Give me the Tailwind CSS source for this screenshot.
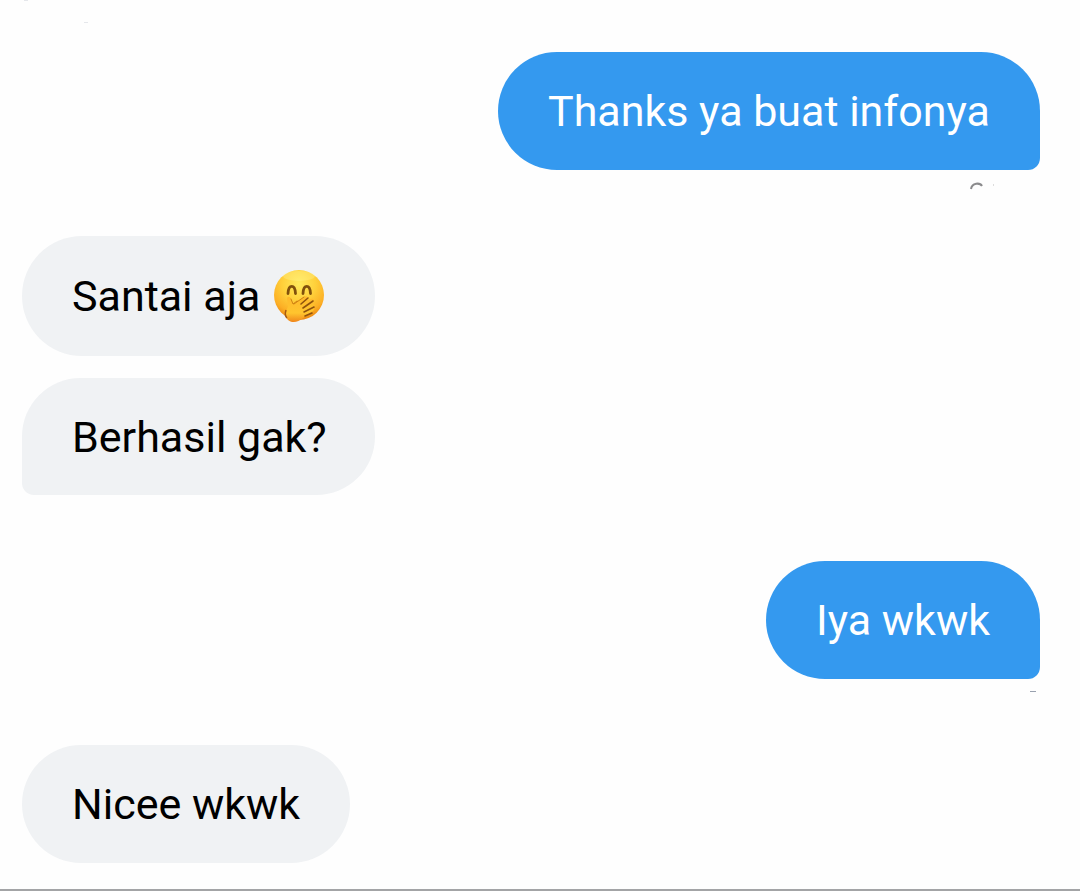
<!DOCTYPE html>
<html lang="id">
<head>
<meta charset="utf-8">
<meta name="viewport" content="width=device-width, initial-scale=1">
<title>Percakapan</title>
<script src="https://cdn.jsdelivr.net/npm/@tailwindcss/browser@4"></script>
</head>
<body class="bg-[#fefefe] font-['Roboto','Liberation_Sans',sans-serif] text-[43px] leading-[54px] text-black">
<main class="flex min-h-screen flex-col border-b-2 border-[#a3a4a6]">
  <div class="flex h-[52px] items-start gap-14 pl-6" aria-hidden="true">
    <span class="h-px w-1 bg-gray-200"></span>
    <span class="mt-[22px] h-px w-1 bg-gray-200"></span>
  </div>
  <ol class="flex flex-col pr-10 pl-[22px]">
    <li class="flex flex-col items-end">
      <p class="rounded-[59px] rounded-br-xl bg-[#3499ef] px-[50px] py-8 text-white">Thanks ya buat infonya</p>
      <div class="flex h-[66px] items-start pt-3 pr-11" aria-hidden="true">
        <svg class="h-2 w-7" viewBox="0 0 28 8" fill="none"><path d="M3 7C4 .5 12 .5 14 4" stroke="#8b8b8d" stroke-width="2"/><path d="M25 3h1" stroke="#bbb"/></svg>
      </div>
    </li>
    <li class="mb-[22px] flex">
      <p class="flex items-center rounded-[60px] bg-[#f0f2f4] px-[50px] py-[33px]">
        <span>Santai aja</span>
        <svg class="ml-[13px] h-[54px] w-[52px]" viewBox="0 0 52 54" role="img" aria-label="Wajah dengan tangan menutup mulut">
          <defs>
            <radialGradient id="face" cx="50%" cy="28%" r="74%">
              <stop offset="0" stop-color="#ffea5c"/><stop offset=".45" stop-color="#ffd03a"/><stop offset=".78" stop-color="#fcaf25"/><stop offset="1" stop-color="#e9800d"/>
            </radialGradient>
            <linearGradient id="hand" x1="0" y1="0" x2="0" y2="1">
              <stop offset="0" stop-color="#ffb92c"/><stop offset=".65" stop-color="#ffc52e"/><stop offset="1" stop-color="#f0861b"/>
            </linearGradient>
          </defs>
          <circle cx="26" cy="26" r="25" fill="url(#face)"/>
          <ellipse cx="26" cy="7" rx="16" ry="5" fill="#fff7a0" opacity=".3"/>
          <path d="M15 24.500C15.500 15 22 15 22.500 24.500M30 24.500C30.500 15 37 15 37.500 24.500" fill="none" stroke="#81510c" stroke-width="2.800" stroke-linecap="round"/>
          <path d="M15 51C11 47 14 41 15 37L14 30C14 27 17 27 18 30L20 35L31 28C34 26 36 28 34 31L38 30C41 29 42 32 40 34C42 34 42 37 40 38C42 39 41 42 38 43L30 49C25 54 18 54 15 51Z" fill="url(#hand)"/>
          <path d="M18 30L20 35L24 32M21 35L31 28" fill="none" stroke="#d08212" stroke-width="1" stroke-linecap="round"/>
          <path d="M28 35L35 29M30 39L40 32M31 43L41 38M32 47L39 44" fill="none" stroke="#8f520d" stroke-width="1.600" stroke-linecap="round"/>
          <path d="M13 41C12 44 12 47 14 49" fill="none" stroke="#a65a10" stroke-width="1.500"/>
        </svg>
      </p>
    </li>
    <li class="mb-[66px] flex">
      <p class="rounded-[59px] rounded-bl-xl bg-[#f0f2f4] pr-12 pl-[50px] pt-8 pb-[31px]">Berhasil gak?</p>
    </li>
    <li class="flex flex-col items-end">
      <p class="rounded-[59px] rounded-br-xl bg-[#3499ef] px-[50px] py-8 text-white">Iya wkwk</p>
      <div class="flex h-[66px] items-start pt-3 pr-1" aria-hidden="true"><span class="h-px w-1.5 bg-gray-400"></span></div>
    </li>
    <li class="flex">
      <p class="rounded-[59px] bg-[#f0f2f4] px-[50px] py-8">Nicee wkwk</p>
    </li>
  </ol>
</main>
</body>
</html>
